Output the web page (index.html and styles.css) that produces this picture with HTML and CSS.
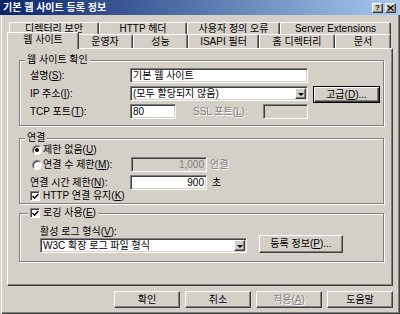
FILE: index.html
```html
<!DOCTYPE html>
<html lang="ko">
<head>
<meta charset="utf-8">
<title>기본 웹 사이트 등록 정보</title>
<link rel="stylesheet" href="styles.css">
</head>
<body>
<div class="window">
  <div class="titlebar">
    <span class="title">기본 웹 사이트 등록 정보</span>
    <span class="caption-btns">
      <span class="cbtn cbtn-help">?</span>
      <span class="cbtn cbtn-close"><svg width="7" height="6" viewBox="0 0 7 6"><path d="M0.5 0.5 L6.5 5.5 M6.5 0.5 L0.5 5.5" stroke="#000" stroke-width="1.4" fill="none"/></svg></span>
    </span>
  </div>
  <div class="client">
    <div class="tabs">
      <div class="tabrow tabrow-back">
        <span class="tab t-dir">디렉터리 보안</span>
        <span class="tab t-http">HTTP 헤더</span>
        <span class="tab t-err">사용자 정의 오류</span>
        <span class="tab t-ext">Server Extensions</span>
      </div>
      <div class="tabrow tabrow-front">
        <span class="tab tab-active t-web">웹 사이트</span>
        <span class="tab t-op">운영자</span>
        <span class="tab t-perf">성능</span>
        <span class="tab t-isapi">ISAPI 필터</span>
        <span class="tab t-home">홈 디렉터리</span>
        <span class="tab t-doc">문서</span>
      </div>
    </div>
    <div class="panel">
      <div class="group group-site">
        <span class="group-title">웹 사이트 확인</span>
        <div class="row">
          <span class="lbl">설명(<u>S</u>):</span>
          <span class="field f-desc">기본 웹 사이트</span>
        </div>
        <div class="row">
          <span class="lbl">IP 주소(<u>I</u>):</span>
          <span class="field combo f-ip"><span class="combo-text">(모두 할당되지 않음)</span><span class="combo-btn"><span class="arrow"></span></span></span>
          <span class="btn btn-default btn-adv">고급(<u>D</u>)...</span>
        </div>
        <div class="row">
          <span class="lbl">TCP 포트(<u>T</u>):</span>
          <span class="field f-port">80</span>
          <span class="lbl-dis ssl">SSL 포트(<u>L</u>):</span>
          <span class="field field-dis f-ssl"></span>
        </div>
      </div>
      <div class="group group-conn">
        <span class="group-title">연결</span>
        <div class="row row-small">
          <span class="radio radio-on"></span>
          <span class="opt-lbl">제한 없음(<u>U</u>)</span>
        </div>
        <div class="row row-limit">
          <span class="radio"></span>
          <span class="opt-lbl lbl-limit">연결 수 제한(<u>M</u>):</span>
          <span class="field field-dis f-limit">1,000</span>
          <span class="unit lbl-dis">연결</span>
        </div>
        <div class="row row-timeout">
          <span class="lbl">연결 시간 제한(<u>N</u>):</span>
          <span class="field f-time">900</span>
          <span class="unit unit-sec">초</span>
        </div>
        <div class="row row-small">
          <span class="check"><svg width="7" height="7" viewBox="0 0 7 7"><path d="M0.5 3 L2.5 5.2 L6.5 1" stroke="#000" stroke-width="1.5" fill="none"/></svg></span>
          <span class="opt-lbl">HTTP 연결 유지(<u>K</u>)</span>
        </div>
      </div>
      <div class="group group-log">
        <span class="group-title group-title-check">
          <span class="check"><svg width="7" height="7" viewBox="0 0 7 7"><path d="M0.5 3 L2.5 5.2 L6.5 1" stroke="#000" stroke-width="1.5" fill="none"/></svg></span>
          <span class="opt-lbl">로깅 사용(<u>E</u>)</span>
        </span>
        <div class="log-lbl">활성 로그 형식(<u>V</u>):</div>
        <div class="row">
          <span class="field combo f-log"><span class="combo-text">W3C 확장 로그 파일 형식</span><span class="combo-btn"><span class="arrow"></span></span></span>
          <span class="btn btn-props">등록 정보(<u>P</u>)...</span>
        </div>
      </div>
    </div>
    <div class="buttons">
      <span class="btn btn-dlg">확인</span>
      <span class="btn btn-dlg">취소</span>
      <span class="btn btn-dlg btn-dis">적용(<u>A</u>)</span>
      <span class="btn btn-dlg">도움말</span>
    </div>
  </div>
</div>
</body>
</html>
```

FILE: styles.css
```css
* {
  box-sizing: border-box;
}

html,
body {
  margin: 0;
  padding: 0;
}

body {
  width: 400px;
  height: 314px;
  overflow: hidden;
  background: #d4d0c8;
  color: #000;
  font-family: "Liberation Sans", "Noto Sans CJK KR", sans-serif;
  font-size: 10px;
  line-height: 12px;
}

u {
  text-decoration: underline;
  text-underline-offset: 1px;
}

.window {
  width: 400px;
  height: 314px;
  display: flex;
  flex-direction: column;
  background: #d4d0c8;
  box-shadow: inset 1px 0 #d4d0c8, inset 2px 0 #fff, inset -1px -1px #404040, inset -2px -2px #808080;
}

/* title bar */
.titlebar {
  height: 15px;
  flex: none;
  display: flex;
  align-items: center;
  padding: 0 4px 0 3px;
  background: linear-gradient(to right, #0a246a, #a6caf0);
  color: #fff;
  font-weight: bold;
  font-size: 10px;
}

.title {
  white-space: nowrap;
}

.caption-btns {
  margin-left: auto;
  display: flex;
  gap: 2px;
}

.cbtn {
  width: 11px;
  height: 10px;
  display: flex;
  align-items: center;
  justify-content: center;
  background: #d4d0c8;
  border: 1px solid;
  border-color: #fff #404040 #404040 #fff;
  box-shadow: inset -1px -1px #808080;
  color: #000;
  font-family: "Liberation Sans", sans-serif;
  font-size: 8px;
  line-height: 8px;
  font-weight: bold;
}

/* client */
.client {
  flex: 1;
  display: flex;
  flex-direction: column;
  padding: 7px 7px 0 7px;
}

.tabs {
  padding-left: 2px;
}

.tabrow {
  display: flex;
  align-items: flex-end;
}

.tabrow-back {
  height: 12px;
}

.tabrow-front {
  height: 14px;
}

.tab {
  height: 100%;
  display: flex;
  align-items: center;
  justify-content: center;
  white-space: nowrap;
  background: #d4d0c8;
  border-top: 1px solid #fff;
  border-left: 1px solid #fff;
  border-right: 1px solid #404040;
  border-radius: 2px 2px 0 0;
  box-shadow: inset -1px 0 #808080;
}

.tabrow-back .tab {
  height: 13px;
  margin-bottom: -1px;
}

.t-dir { width: 90px; }
.t-http { width: 88px; }
.t-err { width: 93px; }
.t-ext { width: 111px; }

.t-web { width: 68px; }
.t-op { width: 56px; }
.t-perf { width: 55px; }
.t-isapi { width: 71px; }
.t-home { width: 76px; }
.t-doc { width: 56px; }

.tab-active {
  position: relative;
  z-index: 1;
  width: 72px;
  height: 17px;
  margin: 0 -2px -1px -2px;
  padding-bottom: 3px;
}

/* panel */
.panel {
  height: 238px;
  flex: none;
  border: 1px solid;
  border-color: #fff #404040 #404040 #fff;
  box-shadow: inset -1px -1px #808080;
  padding: 11px 8px 0 11px;
}

.group {
  position: relative;
  border: 1px solid #808080;
  box-shadow: 1px 1px 0 #fff, inset 1px 1px 0 #fff;
  padding-left: 10px;
}

.group-title {
  position: absolute;
  top: -7px;
  left: 5px;
  padding: 0 2px;
  background: #d4d0c8;
  line-height: 12px;
  white-space: nowrap;
}

.group-site {
  height: 66px;
  padding-top: 7px;
}

.group-conn {
  height: 66px;
  margin-top: 12px;
  padding-top: 5px;
}

.group-log {
  height: 49px;
  margin-top: 9px;
  padding-top: 12px;
  padding-left: 20px;
}

.group-title-check {
  left: 8px;
  display: flex;
  align-items: center;
}

.row {
  display: flex;
  align-items: center;
  height: 15px;
  white-space: nowrap;
}

.row + .row {
  margin-top: 3px;
}

.lbl {
  width: 100px;
  flex: none;
}

.field {
  height: 15px;
  flex: none;
  display: flex;
  align-items: center;
  padding: 0 2px;
  background: #fff;
  border: 1px solid;
  border-color: #808080 #fff #fff #808080;
  box-shadow: inset 1px 1px #404040, inset -1px -1px #d4d0c8;
  white-space: nowrap;
  overflow: hidden;
}

.field-dis {
  background: #d4d0c8;
  color: #808080;
}

.f-desc { width: 178px; }
.f-ip { width: 178px; }
.f-port { width: 46px; }
.f-ssl { width: 45px; }
.f-log { width: 207px; }

.combo {
  padding-right: 1px;
}

.combo-text {
  flex: 1;
  overflow: hidden;
}

.combo-btn {
  width: 11px;
  height: 11px;
  flex: none;
  display: flex;
  align-items: center;
  justify-content: center;
  background: #d4d0c8;
  border: 1px solid;
  border-color: #fff #404040 #404040 #fff;
  box-shadow: inset -1px -1px #808080;
}

.arrow {
  width: 0;
  height: 0;
  border-left: 3px solid transparent;
  border-right: 3px solid transparent;
  border-top: 3px solid #000;
  margin-top: 1px;
}

.btn {
  height: 17px;
  flex: none;
  display: flex;
  align-items: center;
  justify-content: center;
  background: #d4d0c8;
  border: 1px solid;
  border-color: #fff #404040 #404040 #fff;
  box-shadow: inset -1px -1px #808080;
  white-space: nowrap;
}

.btn-default {
  border-color: #000;
  box-shadow: inset 1px 1px #fff, inset -1px -1px #404040, inset -2px -2px #808080;
}

.btn-adv {
  width: 67px;
  margin-left: 5px;
  align-self: flex-start;
}

.lbl-dis {
  color: #808080;
  text-shadow: 1px 1px 0 #fff;
}

.ssl {
  width: 70px;
  margin-left: 17px;
}

.row-small {
  height: 12px;
}

.row-small + .row,
.row + .row-small {
  margin-top: 1px;
}

.row-timeout {
  margin-top: 2px;
}

.row-timeout + .row-small {
  margin-top: 0;
}

.radio {
  width: 10px;
  height: 10px;
  flex: none;
  margin-left: 2px;
  margin-right: 1px;
  border-radius: 50%;
  background: #fff;
  border: 1px solid;
  border-color: #808080 #fff #fff #808080;
  box-shadow: inset 1px 1px #404040;
  display: flex;
  align-items: center;
  justify-content: center;
}

.radio-on::after {
  content: "";
  width: 4px;
  height: 4px;
  border-radius: 50%;
  background: #000;
}

.check {
  width: 10px;
  height: 10px;
  flex: none;
  margin-right: 3px;
  background: #fff;
  border: 1px solid;
  border-color: #808080 #fff #fff #808080;
  box-shadow: inset 1px 1px #404040;
  display: flex;
  align-items: center;
  justify-content: center;
}

.check svg {
  display: block;
}

.lbl-limit {
  width: 88px;
  flex: none;
}

.f-limit {
  width: 76px;
  justify-content: flex-end;
}

.f-time {
  width: 77px;
  justify-content: flex-end;
}

.unit {
  margin-left: 3px;
}

.unit-sec {
  margin-left: 5px;
}

.log-lbl {
  height: 12px;
  white-space: nowrap;
}

.group-log .row {
  align-items: flex-start;
}

.btn-props {
  width: 84px;
  height: 18px;
  margin-left: 12px;
  margin-top: -3px;
}

/* dialog buttons */
.buttons {
  display: flex;
  justify-content: flex-end;
  gap: 5px;
  margin-top: 5px;
}

.btn-dlg {
  width: 66px;
}

.btn-dis {
  color: #808080;
  text-shadow: 1px 1px 0 #fff;
}
```
